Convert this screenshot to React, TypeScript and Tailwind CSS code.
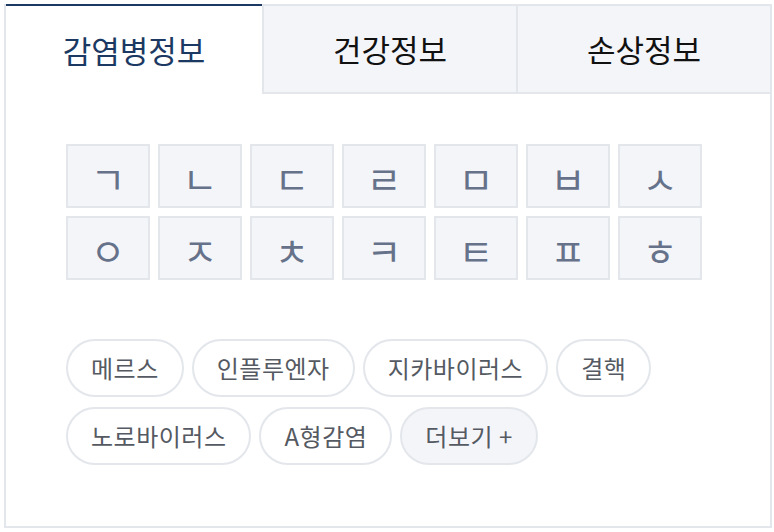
import React from "react";

const consonants = ["ㄱ", "ㄴ", "ㄷ", "ㄹ", "ㅁ", "ㅂ", "ㅅ", "ㅇ", "ㅈ", "ㅊ", "ㅋ", "ㅌ", "ㅍ", "ㅎ"];
const diseases = ["메르스", "인플루엔자", "지카바이러스", "결핵", "노로바이러스", "A형감염"];

const App = () => {
  return (
    <div
      className="p-1 bg-white"
      style={{ fontFamily: '"Noto Sans CJK KR", "Noto Sans", sans-serif' }}
    >
      <div className="w-[768px] h-[524px] border-x-2 border-b-2 border-[#e3e6eb] bg-white">
        {/* Tabs */}
        <div className="flex h-[90px]">
          <button className="w-[256px] border-t-2 border-[#1b3962] bg-white text-[31px] text-[#1b3962]">
            감염병정보
          </button>
          <button className="flex-1 border-t-2 border-l-2 border-b-2 border-[#e3e6eb] bg-[#f4f5f9] text-[31px] text-[#111]">
            건강정보
          </button>
          <button className="flex-1 border-t-2 border-l-2 border-b-2 border-[#e3e6eb] bg-[#f4f5f9] text-[31px] text-[#111]">
            손상정보
          </button>
        </div>

        <div className="pl-[60px] pt-[50px]">
          {/* Consonant index */}
          <div className="grid grid-cols-[repeat(7,84px)] gap-2">
            {consonants.map((c) => (
              <button
                key={c}
                className="h-16 pt-1 border-2 border-[#e3e6eb] bg-[#f4f5f9] text-[38px] leading-none text-[#66718a]"
              >
                {c}
              </button>
            ))}
          </div>

          {/* Popular keywords */}
          <div className="mt-[59px] w-[640px] flex flex-wrap gap-x-2 gap-y-[10px]">
            {diseases.map((d) => (
              <button
                key={d}
                className="h-[58px] px-[23px] rounded-full border-2 border-[#e3e6eb] bg-white text-[24px] tracking-[0.5px] text-[#555a62]"
              >
                {d}
              </button>
            ))}
            <button className="h-[58px] px-[23px] rounded-full border-2 border-[#e3e6eb] bg-[#f4f5f9] text-[24px] tracking-[0.5px] text-[#555a62]">
              더보기 +
            </button>
          </div>
        </div>
      </div>
    </div>
  );
};

export default App;
